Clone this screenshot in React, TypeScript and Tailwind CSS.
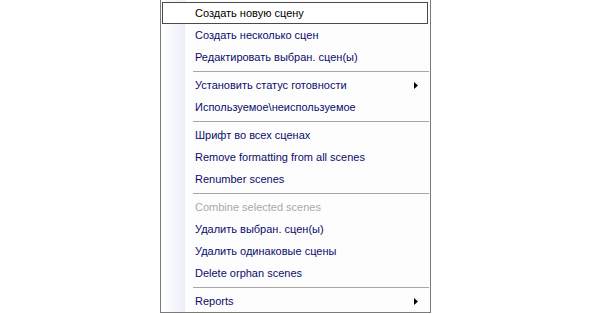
import React from "react";

type Item =
  | { kind: "item"; label: string; arrow?: boolean; disabled?: boolean; active?: boolean }
  | { kind: "sep" };

const items: Item[] = [
  { kind: "item", label: "Создать новую сцену", active: true },
  { kind: "item", label: "Создать несколько сцен" },
  { kind: "item", label: "Редактировать выбран. сцен(ы)" },
  { kind: "sep" },
  { kind: "item", label: "Установить статус готовности", arrow: true },
  { kind: "item", label: "Используемое\\неиспользуемое" },
  { kind: "sep" },
  { kind: "item", label: "Шрифт во всех сценах" },
  { kind: "item", label: "Remove formatting from all scenes" },
  { kind: "item", label: "Renumber scenes" },
  { kind: "sep" },
  { kind: "item", label: "Combine selected scenes", disabled: true },
  { kind: "item", label: "Удалить выбран. сцен(ы)" },
  { kind: "item", label: "Удалить одинаковые сцены" },
  { kind: "item", label: "Delete orphan scenes" },
  { kind: "sep" },
  { kind: "item", label: "Reports", arrow: true },
];

function Arrow() {
  return (
    <svg width="4" height="7" viewBox="0 0 4 7" className="block">
      <path d="M0 0 L4 3.5 L0 7 Z" fill="#000" />
    </svg>
  );
}

export default function App() {
  return (
    <div className="w-[591px] h-[314px] bg-white flex justify-center overflow-hidden">
      <div
        className="w-[271px] h-[313px] border-l border-r border-b border-[#7a7a7a] bg-[#fdfdfd] relative pt-[2px]"
        style={{ fontFamily: '"Liberation Sans", Arial, sans-serif' }}
      >
        <div className="absolute left-0 top-0 bottom-0 w-[24px] bg-gradient-to-r from-[#ffffff] to-[#eceff8]" />
        <div className="relative flex flex-col">
          {items.map((it, i) =>
            it.kind === "sep" ? (
              <div key={i} className="h-[6px] pt-[3px] pl-[32px] pr-[1px]">
                <div className="h-px bg-[#a6a6a6]" />
              </div>
            ) : (
              <div key={i} className="h-[22px] pl-[1px] pr-[2px]">
                <div
                  className={
                    "h-[22px] flex items-center pl-[32px] pr-[9px] text-[11px] leading-[22px] " +
                    (it.active
                      ? "border border-[#4a4a4a] bg-white text-[#000000]"
                      : "border border-transparent") +
                    (it.disabled ? " text-[#a9a9a9]" : it.active ? "" : " text-[#0c0c6c]")
                  }
                >
                  <span className="flex-1 whitespace-nowrap">{it.label}</span>
                  {it.arrow && <Arrow />}
                </div>
              </div>
            )
          )}
        </div>
      </div>
    </div>
  );
}
